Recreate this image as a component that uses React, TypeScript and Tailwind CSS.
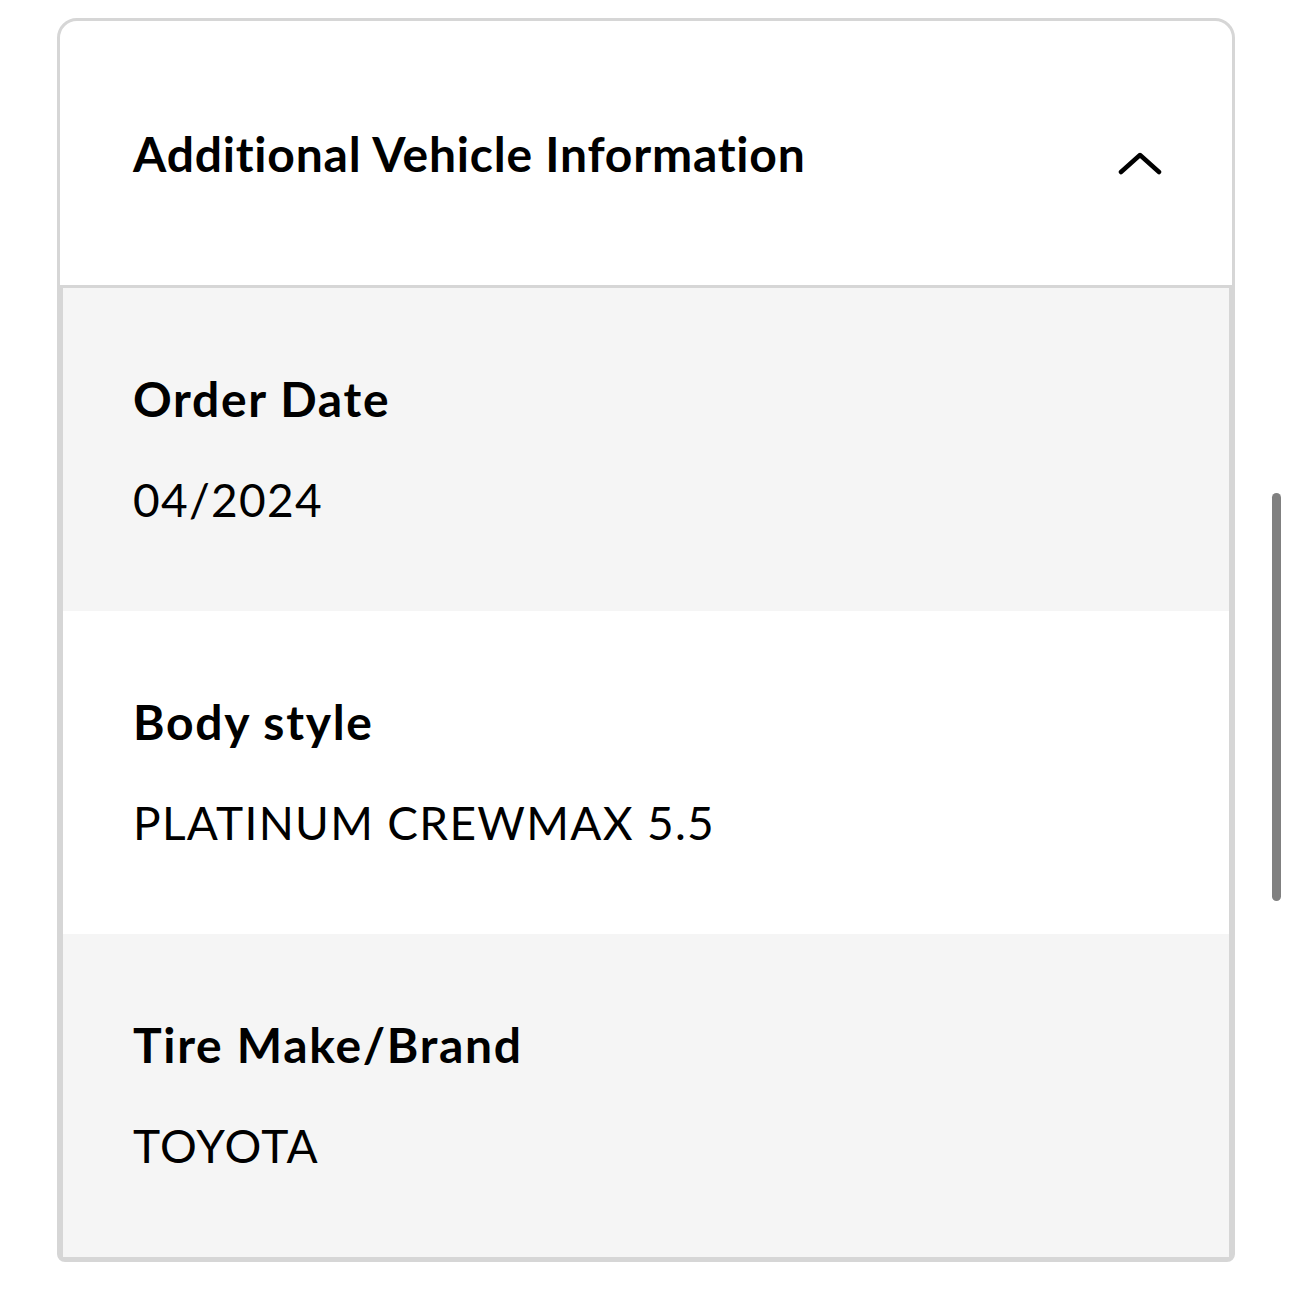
const rows = [
  { label: "Order Date", value: "04/2024", bg: "bg-[#f5f5f5]" },
  { label: "Body style", value: "PLATINUM CREWMAX 5.5", bg: "bg-white" },
  { label: "Tire Make/Brand", value: "TOYOTA", bg: "bg-[#f5f5f5]" },
];

export default function App() {
  return (
    <div className="relative h-[1290px] w-[1290px] bg-white pt-[18px] font-['Lato',sans-serif] text-black">
      <div className="ml-[57px] w-[1178px] rounded-t-[20px] rounded-b-[8px] border-[3px] border-[#d6d6d6] bg-white">
        {/* Header */}
        <div className="flex h-[267px] items-start justify-between border-b-[3px] border-[#d6d6d6] pl-[73px] pr-[70px] pt-[105px]">
          <h2 className="text-[48px] font-bold leading-[56px] tracking-[0.8px]">
            Additional Vehicle Information
          </h2>
          <svg width="44" height="26" viewBox="0 0 44 26" fill="none" className="mt-[25px]">
            <polyline
              points="3,21 22,4 41,21"
              stroke="#000"
              strokeWidth="4.5"
              strokeLinecap="round"
              strokeLinejoin="round"
            />
          </svg>
        </div>

        {/* Rows */}
        <div className="border-x-[3px] border-b-[2px] border-[#d6d6d6]">
          {rows.map((row) => (
            <div key={row.label} className={`${row.bg} pl-[70px] pt-[83px] pb-[83px]`}>
              <div className="text-[48px] font-bold leading-[56px] tracking-[1.7px]">{row.label}</div>
              <div className="mt-[45px] text-[46px] leading-[56px] tracking-[1.3px]">{row.value}</div>
            </div>
          ))}
        </div>
      </div>

      {/* Scrollbar */}
      <div className="absolute left-[1272px] top-[493px] h-[408px] w-[9px] rounded-full bg-[#808080]" />
    </div>
  );
}
